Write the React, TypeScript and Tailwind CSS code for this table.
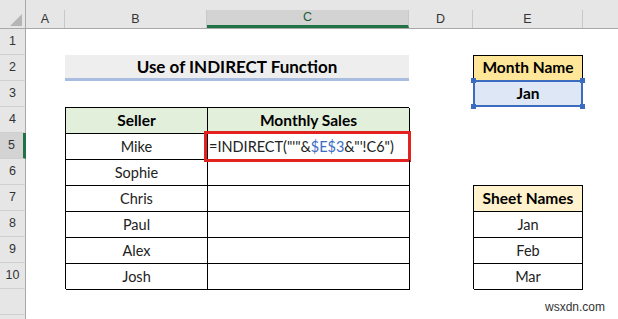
import React from 'react';

const columns = [
  { label: 'A', w: 'w-[39px]' },
  { label: 'B', w: 'w-[142px]' },
  { label: 'C', w: 'w-[202px]', active: true },
  { label: 'D', w: 'w-[64px]' },
  { label: 'E', w: 'w-[110px]' },
];

const sellers = ['Mike', 'Sophie', 'Chris', 'Paul', 'Alex', 'Josh'];
const sheets = ['Jan', 'Feb', 'Mar'];

function ColumnHeaders() {
  return (
    <div className="flex h-[29px]">
      <div className="relative w-[26px] shrink-0 border-r border-b border-[#a8a8a8] bg-[#e6e6e6]">
        <svg className="absolute left-0 top-0" width="26" height="29" viewBox="0 0 26 29">
          <polygon points="22,14 22,26 10,26" fill="#b5b5b5" />
        </svg>
      </div>
      <div className="flex flex-1 flex-col bg-[#e6e6e6]">
        <div className="h-[10px]" />
        <div className="flex h-[19px] border-b border-[#a8a8a8]">
          {columns.map((c) => (
            <div
              key={c.label}
              className={`${c.w} shrink-0 flex items-center justify-center border-r border-[#c8c8c8] ${
                c.active ? 'bg-[#d3d3d3] border-b-[3px] border-b-[#217346] text-[#1d5c38]' : 'text-[#333]'
              }`}
            >
              {c.label}
            </div>
          ))}
          <div className="flex-1" />
        </div>
      </div>
    </div>
  );
}

function RowHeaders() {
  const rows = Array.from({ length: 11 }, (_, i) => i + 1);
  return (
    <div className="w-[26px] shrink-0 flex flex-col bg-[#e6e6e6]">
      {rows.map((r) => (
        <div
          key={r}
          className={`h-[26px] shrink-0 flex items-center justify-center border-b border-[#cfcfcf] ${
            r === 5 ? 'bg-[#d3d3d3] border-r-[3px] border-r-[#217346]' : 'border-r border-r-[#a8a8a8]'
          }`}
        >
          {r <= 10 ? r : ''}
        </div>
      ))}
      <div className="flex-1 border-r border-[#a8a8a8]" />
    </div>
  );
}

function SalesTable() {
  return (
    <div className="col-start-2 col-span-2 row-start-4 row-span-7 grid grid-cols-[142px_202px] grid-rows-[repeat(7,26px)] border-l border-t border-black">
      <div className="flex items-center justify-center border-r border-b border-black bg-[#e2efda] text-[15.5px] font-bold text-black">
        Seller
      </div>
      <div className="flex items-center justify-center border-r border-b border-black bg-[#e2efda] text-[15.5px] font-bold text-black">
        Monthly Sales
      </div>
      {sellers.map((name, i) => (
        <React.Fragment key={name}>
          <div className="flex items-center justify-center border-r border-b border-black">{name}</div>
          <div className="relative flex items-center border-r border-b border-black">
            {i === 0 && (
              <>
                <span className="whitespace-nowrap pl-[1px]">
                  =INDIRECT("'"&amp;<span className="text-[#3c6dc5]">$E$3</span>&amp;"'!C6")
                </span>
                <div className="absolute -left-[4px] -right-[2px] -top-[3px] -bottom-[3px] border-[3px] border-[#e3211f]" />
              </>
            )}
          </div>
        </React.Fragment>
      ))}
    </div>
  );
}

function Handle({ pos }: { pos: string }) {
  return <div className={`absolute h-[5px] w-[5px] bg-[#3b6cc0] ${pos}`} />;
}

function MonthBox() {
  return (
    <>
      <div className="col-start-5 row-start-2 flex items-center justify-center border border-black bg-[#ffe699] text-[15.5px] font-bold text-black">
        Month Name
      </div>
      <div className="relative col-start-5 row-start-3 flex items-center justify-center border-x border-b border-black bg-[#dde7f5] text-[15.5px] font-bold text-black">
        Jan
        <div className="absolute -left-[1px] -right-[1px] -top-[1px] -bottom-[1px] border-2 border-[#3b6cc0]" />
        <Handle pos="-left-[3px] -top-[3px]" />
        <Handle pos="-right-[3px] -top-[3px]" />
        <Handle pos="-left-[3px] -bottom-[3px]" />
        <Handle pos="-right-[3px] -bottom-[3px]" />
      </div>
    </>
  );
}

function SheetNames() {
  return (
    <div className="col-start-5 row-start-7 row-span-4 grid grid-rows-[repeat(4,26px)] border-l border-t border-black">
      <div className="flex items-center justify-center border-r border-b border-black bg-[#fff2cc] text-[15.5px] font-bold text-black">
        Sheet Names
      </div>
      {sheets.map((s) => (
        <div key={s} className="flex items-center justify-center border-r border-b border-black">
          {s}
        </div>
      ))}
    </div>
  );
}

export default function App() {
  return (
    <div className="relative w-[618px] h-[319px] overflow-hidden bg-white flex flex-col">
      <div className="font-['Liberation_Sans',sans-serif] text-[12.5px]">
        <ColumnHeaders />
      </div>
      <div className="flex flex-1">
        <div className="font-['Liberation_Sans',sans-serif] text-[12.5px] text-[#333] flex">
          <RowHeaders />
        </div>
        <div className="grid flex-1 grid-cols-[39px_142px_202px_64px_110px_1fr] grid-rows-[repeat(11,26px)] content-start font-['Lato',sans-serif] text-[14.5px] text-[#222]">
          <div className="col-start-2 col-span-2 row-start-2 flex items-center justify-center border-b-[3px] border-[#a9bde0] bg-[#eeeeee] text-[17px] font-bold text-black">
            Use of INDIRECT Function
          </div>
          <SalesTable />
          <MonthBox />
          <SheetNames />
        </div>
      </div>
      <div className="absolute left-[545px] top-[298px] font-['Liberation_Sans',sans-serif] text-[12px] text-[#333]">
        wsxdn.com
      </div>
    </div>
  );
}
